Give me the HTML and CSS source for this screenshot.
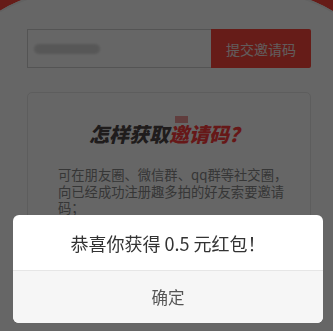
FILE: index.html
```html
<!DOCTYPE html>
<html lang="zh-CN">
<head>
<meta charset="utf-8">
<title>邀请码</title>
<link rel="stylesheet" href="styles.css">
</head>
<body>
<div class="page">
  <div class="arc-deco"></div>
  <div class="invite-row">
    <div class="invite-input"><span class="blur-text"></span></div>
    <button class="invite-btn">提交邀请码</button>
  </div>
  <div class="card">
    <h2 class="card-title">怎样获取<span class="hl">邀请码？</span></h2>
    <p class="card-text">可在朋友圈、微信群、qq群等社交圈，向已经成功注册趣多拍的好友索要邀请码；</p>
  </div>
</div>
<div class="mask"></div>
<div class="dialog">
  <div class="dialog-body">恭喜你获得 0.5 元红包！</div>
  <div class="dialog-btn">确定</div>
</div>
</body>
</html>
```
FILE: styles.css
```css
html, body {
  margin: 0;
  padding: 0;
  background: #fff;
  font-family: "Noto Sans CJK SC", "Noto Sans", sans-serif;
  overflow: hidden;
}
.page {
  position: relative;
  padding: 29px 22px 0 27px;
  height: 331px;
  box-sizing: border-box;
}
.arc-deco {
  position: absolute;
  top: 0;
  left: 0;
  right: 0;
  height: 12px;
  background: #ff463c;
  overflow: hidden;
}
.arc-deco::before {
  content: "";
  position: absolute;
  left: -14px;
  top: -20px;
  width: 360px;
  height: 100px;
  border-radius: 50%;
  background: #fff;
  box-shadow: inset 0 2px 0 #f2f2f2;
}
.invite-row {
  display: flex;
  height: 39px;
}
.invite-input {
  flex: 1;
  border: 1px solid #d2d2d2;
  border-right: none;
  display: flex;
  align-items: center;
  padding-left: 6px;
  box-sizing: border-box;
}
.blur-text {
  display: block;
  width: 66px;
  height: 10px;
  border-radius: 5px;
  background: #dadada;
  filter: blur(1.2px);
}
.invite-btn {
  width: 100px;
  border: none;
  margin: 0;
  padding: 0;
  background: #ff463c;
  color: #f4e6e6;
  font-family: inherit;
  font-size: 14px;
  border-radius: 0 2px 2px 0;
}
.card {
  margin-top: 24px;
  border: 1px solid #e8e8e8;
  border-radius: 5px;
  height: 212px;
  box-sizing: border-box;
  padding: 29px 17px 0 30px;
}
.card-title {
  margin: 0 -17px 0 -30px;
  text-align: center;
  font-size: 20px;
  line-height: 24px;
  font-weight: 900;
  font-style: italic;
  color: #4f4646;
}
.hl {
  position: relative;
  color: #ff3e3e;
}
.hl::before {
  content: "";
  position: absolute;
  left: 6px;
  top: -3px;
  width: 13px;
  height: 7px;
  background: #f09a9a;
}
.card-text {
  margin: 21px 0 0;
  font-size: 13.3px;
  line-height: 16.5px;
  color: #888;
  width: 236px;
}
.mask {
  position: fixed;
  inset: 0;
  background: rgba(0, 0, 0, 0.6);
}
.dialog {
  position: fixed;
  left: 13px;
  top: 215px;
  width: 310px;
  height: 108px;
  border-radius: 6px;
  overflow: hidden;
  background: #fff;
  display: flex;
  flex-direction: column;
}
.dialog-body {
  height: 55px;
  display: flex;
  align-items: center;
  justify-content: center;
  font-size: 18px;
  color: #333;
  border-bottom: 1px solid #e6e6e6;
}
.dialog-btn {
  flex: 1;
  display: flex;
  align-items: center;
  justify-content: center;
  background: #f6f6f6;
  font-size: 16.5px;
  color: #555;
}
```
